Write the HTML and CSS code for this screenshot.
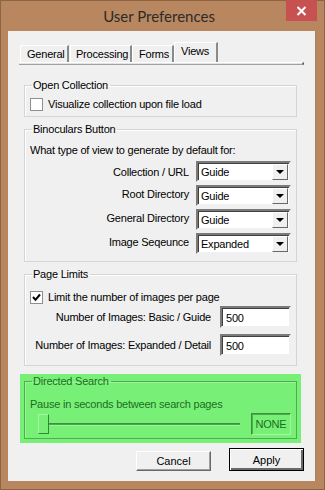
FILE: index.html
```html
<!DOCTYPE html>
<html lang="en">
<head>
  <meta charset="UTF-8" />
  <title>User Preferences</title>
  <link rel="stylesheet" href="styles.css">
</head>
<body>
  <div class="window">
    <div class="titlebar">
      <span></span>
      <h1 class="title">User Preferences</h1>
      <button class="close" aria-label="Close">
        <svg width="11" height="10" viewBox="0 0 11 10">
          <path d="M1.5 1 L9.5 9 M9.5 1 L1.5 9" stroke="#fff" stroke-width="2" fill="none"/>
        </svg>
      </button>
    </div>

    <div class="client">
      <div class="tabs">
        <div class="tab tab-general">General</div>
        <div class="tab tab-processing">Processing</div>
        <div class="tab tab-forms">Forms</div>
        <div class="tab tab-views active">Views</div>
      </div>
      <div class="tab-edge"></div>

      <div class="page">
        <fieldset class="group">
          <legend>Open Collection</legend>
          <label class="check"><span class="box"></span>Visualize collection upon file load</label>
        </fieldset>

        <fieldset class="group binoculars">
          <legend>Binoculars Button</legend>
          <p class="intro">What type of view to generate by default for:</p>
          <div class="form-grid combos">
            <label>Collection / URL</label>
            <div class="combo"><span>Guide</span><i class="drop"></i></div>
            <label class="nudge">Root Directory</label>
            <div class="combo"><span>Guide</span><i class="drop"></i></div>
            <label class="nudge">General Directory</label>
            <div class="combo"><span>Guide</span><i class="drop"></i></div>
            <label class="nudge">Image Seqeunce</label>
            <div class="combo"><span>Expanded</span><i class="drop"></i></div>
          </div>
        </fieldset>

        <fieldset class="group limits">
          <legend>Page Limits</legend>
          <label class="check"><span class="box checked">
            <svg width="11" height="11" viewBox="0 0 11 11"><path d="M2 5 L4.5 7.8 L9 2.5" stroke="#000" stroke-width="2" fill="none"/></svg>
          </span>Limit the number of images per page</label>
          <div class="form-grid numbers">
            <label>Number of Images: Basic / Guide</label>
            <div class="field">500</div>
            <label>Number of Images: Expanded / Detail</label>
            <div class="field">500</div>
          </div>
        </fieldset>

        <div class="highlight">
          <fieldset class="group search">
            <legend>Directed Search</legend>
            <p class="intro">Pause in seconds between search pages</p>
            <div class="slider-row">
              <div class="slider">
                <div class="track"></div>
                <div class="thumb"></div>
              </div>
              <div class="value">NONE</div>
            </div>
          </fieldset>
        </div>
      </div>

      <div class="buttons">
        <button class="btn">Cancel</button>
        <button class="btn default">Apply</button>
      </div>
    </div>
  </div>
</body>
</html>
```

FILE: styles.css
```css
* {
  margin: 0;
  padding: 0;
  box-sizing: border-box;
}

body {
  font-family: "Liberation Sans", Arial, sans-serif;
  font-size: 11px;
  letter-spacing: -0.22px;
  color: #000;
  background: #fff;
}

.window {
  width: 325px;
  height: 490px;
  background: #b9875f;
  border: 1px solid #8c6547;
  display: flex;
  flex-direction: column;
}

/* title bar */
.titlebar {
  height: 30px;
  display: grid;
  grid-template-columns: 1fr auto 1fr;
  padding-right: 7px;
}

.title {
  align-self: center;
  font-family: Lato, "Open Sans", sans-serif;
  font-weight: 400;
  font-size: 15px;
  letter-spacing: 0;
  color: #2b2b2b;
}

.close {
  justify-self: end;
  margin-top: -1px;
  width: 31px;
  height: 21px;
  border: none;
  background: #c75050;
  display: flex;
  align-items: center;
  justify-content: center;
}

/* client area */
.client {
  flex: 1;
  margin: 0 8px 8px 7px;
  background: #f0f0f0;
  border: 1px solid #a7815f;
  border-width: 0 1px 0 0;
}

.tabs {
  display: flex;
  align-items: flex-end;
  height: 20px;
  margin: 11px 0 0 12px;
}

.tab {
  height: 17px;
  padding: 0 0 0 6px;
  line-height: 16px;
  background: #f0f0f0;
  border: 1px solid #fff;
  border-right: 2px solid #8a8a8a;
  border-bottom: none;
}

.tab-general { width: 49px; margin-right: 1px; }
.tab-processing { width: 62px; padding-left: 5px; }
.tab-forms { width: 42px; }
.tab-views { width: 44px; }

.tab.active {
  height: 20px;
  line-height: 17px;
}

.tab-edge {
  height: 3px;
  margin: 0 11px 0 11px;
  border-top: 1px solid #fff;
  border-bottom: 1px solid #a0a0a0;
  border-right: 2px solid #6d6d6d;
  background: #e3e3e3;
}

.page {
  padding: 0 18px 0 16px;
}

/* group boxes */
.group {
  border: 1px solid #d5d5d5;
  box-shadow: inset 1px 1px 0 #fff;
  padding: 6px 5px 5px 5px;
  margin-top: 5px;
  min-width: 0;
}

.group:first-child { margin-top: 13px; }

.group legend {
  line-height: 14px;
  padding: 0 2px 0 1px;
  margin-left: 2px;
}

.check {
  display: flex;
  align-items: center;
  gap: 5px;
  height: 13px;
  line-height: 13px;
}

.box {
  width: 13px;
  height: 13px;
  border: 1px solid #8e8f8f;
  background: #fff;
  display: flex;
  align-items: center;
  justify-content: center;
}

.intro {
  line-height: 14px;
}

.binoculars { padding-top: 7px; padding-bottom: 7px; }

.form-grid {
  display: grid;
  align-items: center;
  justify-items: end;
}

.form-grid label { white-space: nowrap; }

.combos {
  grid-template-columns: 1fr 95px;
  column-gap: 7px;
  row-gap: 3px;
  margin-top: 4px;
}

.nudge { margin-top: -3px; }

.combo {
  justify-self: stretch;
  height: 21px;
  background: #fff;
  border: 2px solid;
  border-color: #7a7a7a #f0f0f0 #f0f0f0 #7a7a7a;
  box-shadow: inset 1px 1px 0 #404040;
  display: flex;
  align-items: center;
  justify-content: space-between;
  padding: 1px 1px 1px 3px;
}

.combo span { padding-top: 1px; }

.drop {
  width: 16px;
  height: 16px;
  background: #f0f0f0;
  border: 1px solid;
  border-color: #fff #696969 #696969 #fff;
  display: flex;
  align-items: center;
  justify-content: center;
}

.drop::after {
  content: "";
  border-left: 4px solid transparent;
  border-right: 4px solid transparent;
  border-top: 4px solid #000;
  margin-top: 1px;
}

.limits { padding-top: 10px; padding-bottom: 9px; }

.numbers {
  grid-template-columns: 1fr 71px;
  column-gap: 9px;
  row-gap: 6px;
  margin-top: 2px;
}

.field {
  justify-self: stretch;
  height: 22px;
  background: #fff;
  border: 2px solid;
  border-color: #7a7a7a #f0f0f0 #f0f0f0 #7a7a7a;
  box-shadow: inset 1px 1px 0 #404040;
  padding: 4px 0 0 4px;
}

/* green highlighted area */
.highlight {
  margin: 8px -4px 0;
  padding: 0 4px 4px;
  background: #78f078;
  color: #1c6e1c;
}

.highlight .group {
  margin-top: 0;
  border-color: #4bb04b;
  box-shadow: inset 1px 1px 0 #9af59a;
  padding: 9px 5px 3px 5px;
}

.slider-row {
  display: flex;
  align-items: center;
  margin-top: 2px;
}

.slider {
  position: relative;
  flex: 1;
  height: 20px;
  margin: 0 11px 0 8px;
  display: flex;
  align-items: center;
}

.track {
  width: 100%;
  height: 3px;
  border-top: 1px solid #3a933a;
  border-bottom: 1px solid #9af59a;
  background: #4aaa4a;
}

.thumb {
  position: absolute;
  left: 0;
  top: 0;
  width: 11px;
  height: 20px;
  background: #78f078;
  border: 1px solid;
  border-color: #a3f7a3 #2f8a2f #2f8a2f #a3f7a3;
}

.value {
  width: 40px;
  height: 22px;
  border: 1px solid;
  border-color: #3a933a #a3f7a3 #a3f7a3 #3a933a;
  box-shadow: inset 1px 1px 0 #4bb04b;
  text-align: center;
  line-height: 20px;
}

/* bottom buttons */
.buttons {
  display: flex;
  justify-content: flex-end;
  align-items: flex-end;
  gap: 18px;
  padding-right: 11px;
  margin-top: 5px;
}

.btn {
  font: inherit;
  width: 75px;
  height: 20px;
  background: #f0f0f0;
  border: 1px solid;
  border-color: #fff #696969 #696969 #fff;
  box-shadow: inset -1px -1px 0 #a0a0a0;
}

.btn.default {
  height: 23px;
  border: 1px solid #000;
  box-shadow: inset 1px 1px 0 #fff, inset -2px -2px 0 #696969;
}
```
